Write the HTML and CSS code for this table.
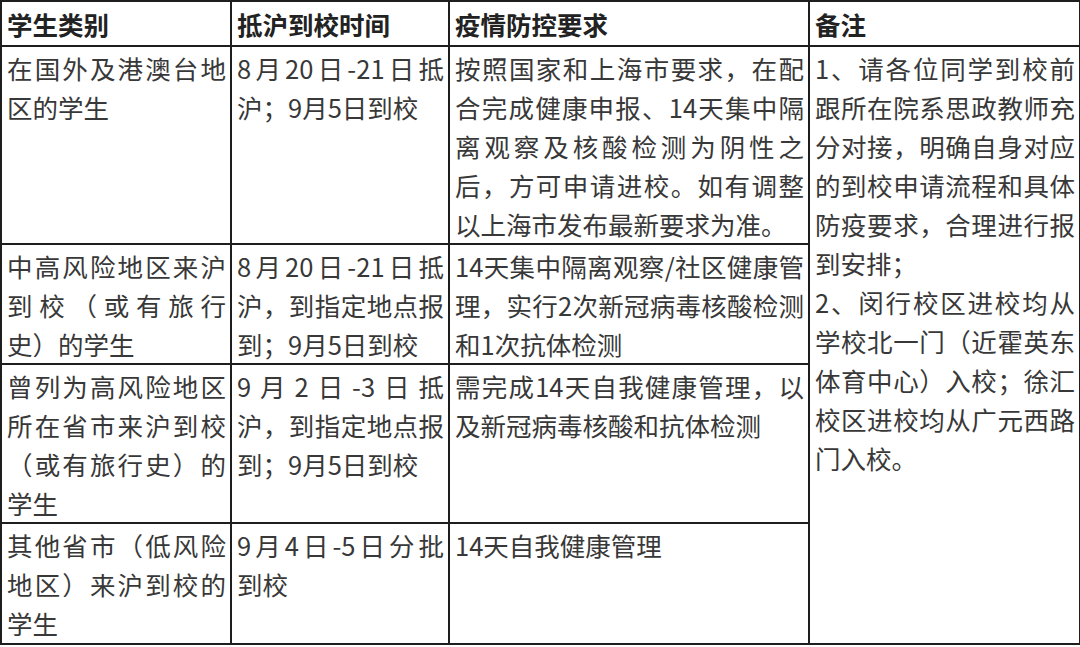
FILE: index.html
```html
<!DOCTYPE html>
<html lang="zh-CN">
<head>
<meta charset="utf-8">
<title>学生返校安排</title>
<link rel="stylesheet" href="styles.css">
</head>
<body>
<table class="plan">
  <colgroup>
    <col class="c1">
    <col class="c2">
    <col class="c3">
    <col class="c4">
  </colgroup>
  <thead>
    <tr>
      <th>学生类别</th>
      <th>抵沪到校时间</th>
      <th>疫情防控要求</th>
      <th>备注</th>
    </tr>
  </thead>
  <tbody>
    <tr class="r1">
      <td>在国外及港澳台地区的学生</td>
      <td>8月20日-21日抵沪；9月5日到校</td>
      <td>按照国家和上海市要求，在配合完成健康申报、14天集中隔离观察及核酸检测为阴性之后，方可申请进校。如有调整以上海市发布最新要求为准。</td>
      <td rowspan="4" class="note">
        <p>1、请各位同学到校前跟所在院系思政教师充分对接，明确自身对应的到校申请流程和具体防疫要求，合理进行报到安排；</p>
        <p>2、闵行校区进校均从学校北一门（近霍英东体育中心）入校；徐汇校区进校均从广元西路门入校。</p>
      </td>
    </tr>
    <tr class="r2">
      <td>中高风险地区来沪到校（或有旅行<span class="keep">史）</span>的学生</td>
      <td>8月20日-21日抵沪，到指定地点报到；9月5日到校</td>
      <td>14天集中隔离观察/社区健康管理，实行2次新冠病毒核酸检测和1次抗体检测</td>
    </tr>
    <tr class="r3">
      <td>曾列为高风险地区所在省市来沪到校（或有旅行史）的学生</td>
      <td>9月2日-3日抵<span class="keep">沪，到</span>指定地点报到；9月5日到校</td>
      <td>需完成14天自我健康管理，以及新冠病毒核酸和抗体检测</td>
    </tr>
    <tr class="r4">
      <td>其他省市（低风险地区）来沪到校的学生</td>
      <td>9月4日-5日分批<span class="keep">到校</span></td>
      <td>14天自我健康管理</td>
    </tr>
  </tbody>
</table>
</body>
</html>
```

FILE: styles.css
```css
html, body {
  margin: 0;
  padding: 0;
  background: #ffffff;
}

.plan {
  width: 1079px;
  table-layout: fixed;
  border-collapse: collapse;
  font-family: "Noto Sans CJK SC", "Noto Sans", sans-serif;
  font-size: 25.5px;
  line-height: 39px;
  color: #383838;
  text-spacing-trim: space-all;
}

.c1 { width: 230px; }
.c2 { width: 218px; }
.c3 { width: 360px; }
.c4 { width: 271px; }

.plan th,
.plan td {
  border: 2px solid #1e1e1e;
  vertical-align: top;
  text-align: justify;
  padding: 1px 4px 0 5px;
}

.plan th {
  font-weight: 700;
  color: #222222;
  text-align: left;
  padding-top: 2px;
  padding-bottom: 2px;
}

.plan .r4 td {
  padding-bottom: 1px;
}

.note p {
  margin: 0;
}

.keep {
  white-space: nowrap;
}
```
